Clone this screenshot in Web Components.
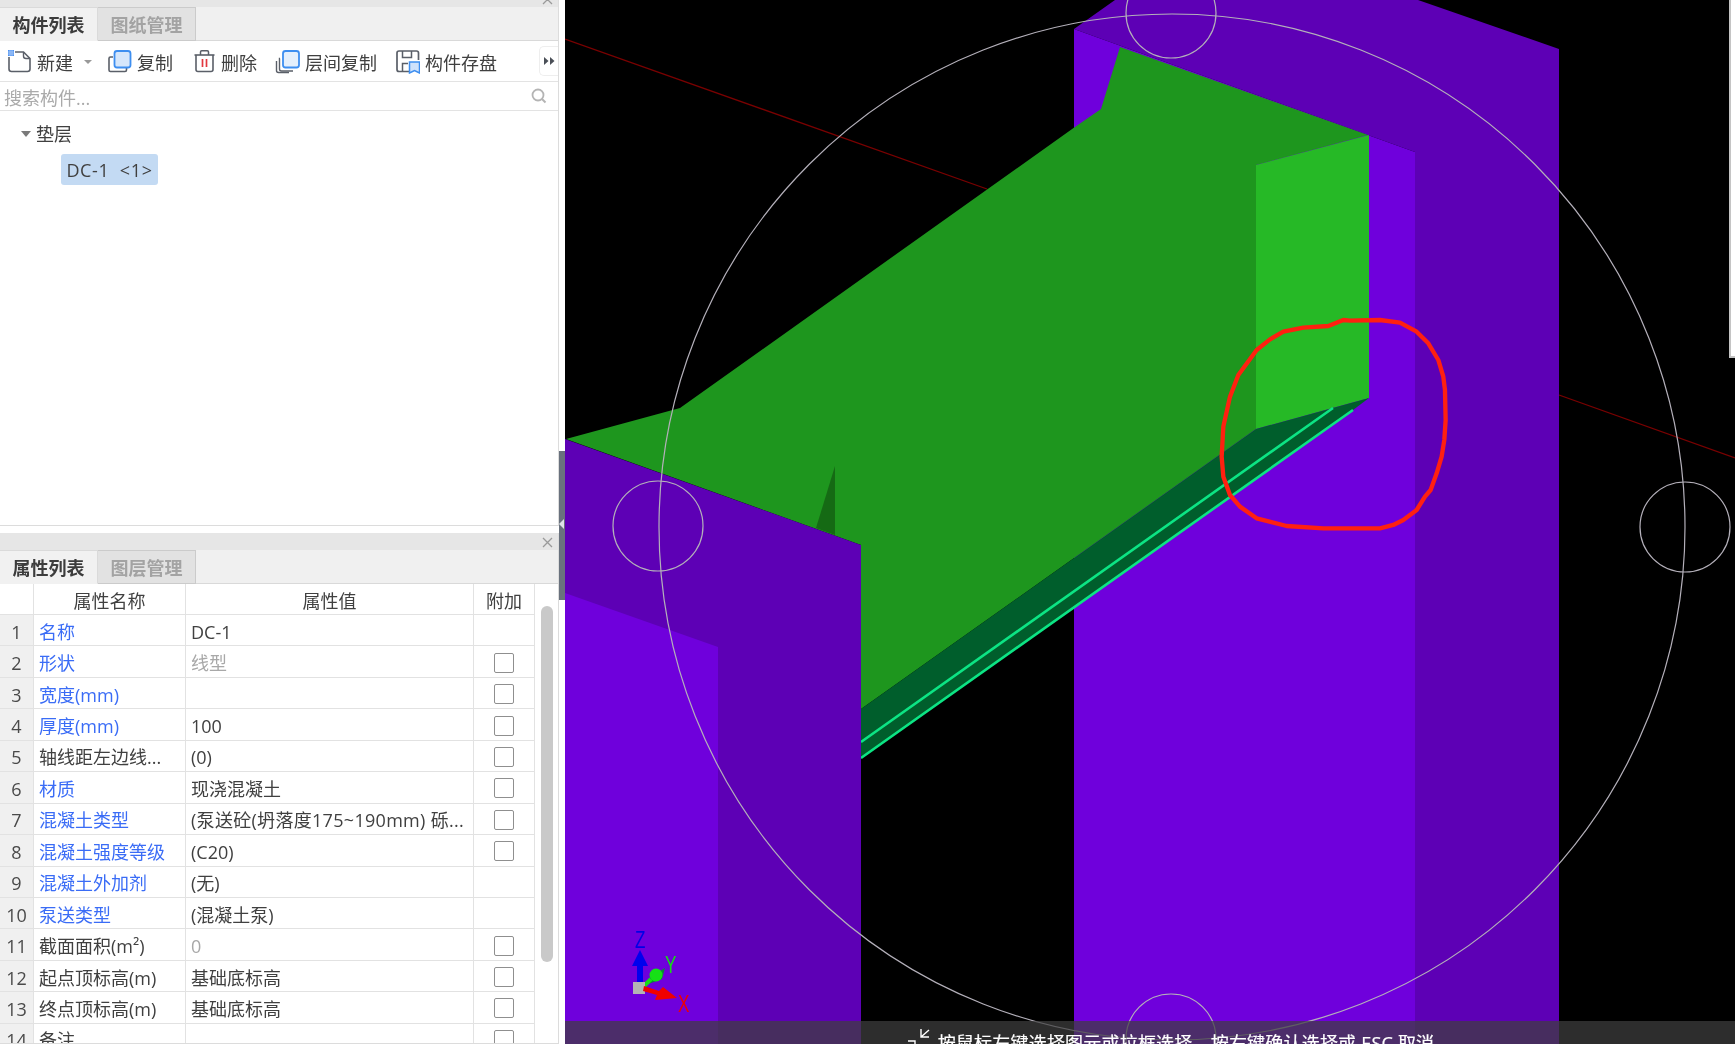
<!DOCTYPE html>
<html lang="zh">
<head>
<meta charset="utf-8">
<title>构件列表</title>
<style>
  html, body { margin: 0; padding: 0; background: #000; overflow: hidden; }
  body { font: 18px/24px "Open Sans", "Noto Sans CJK SC", sans-serif; color: #3c3c3c; }
</style>
</head>
<body>
<x-app>
  <x-sidebar slot="side">
    <x-panel style="--panel-h: 526px; --title-h: 7px;">
      <x-tab slot="tabs" active>构件列表</x-tab>
      <x-tab slot="tabs">图纸管理</x-tab>
      <x-toolbar>
        <x-tool icon="new" caret>新建</x-tool>
        <x-tool icon="copy" style="margin-left:15px">复制</x-tool>
        <x-tool icon="trash" style="margin-left:18px">删除</x-tool>
        <x-tool icon="floor" style="margin-left:18px">层间复制</x-tool>
        <x-tool icon="save" style="margin-left:18px">构件存盘</x-tool>
      </x-toolbar>
      <x-search placeholder="搜索构件..."></x-search>
      <x-tree>
        <span slot="group">垫层</span>
        <span>DC-1  &lt;1&gt;</span>
      </x-tree>
    </x-panel>
    <x-panel style="--panel-h: 511px; --title-h: 17px; margin-top: 7px;">
      <x-tab slot="tabs" active>属性列表</x-tab>
      <x-tab slot="tabs">图层管理</x-tab>
      <x-prop-table>
        <x-prop-row index="1" link><span slot="name">名称</span>DC-1</x-prop-row>
        <x-prop-row index="2" link check gray><span slot="name">形状</span>线型</x-prop-row>
        <x-prop-row index="3" link check><span slot="name">宽度(mm)</span></x-prop-row>
        <x-prop-row index="4" link check><span slot="name">厚度(mm)</span>100</x-prop-row>
        <x-prop-row index="5" check><span slot="name">轴线距左边线...</span>(0)</x-prop-row>
        <x-prop-row index="6" link check><span slot="name">材质</span>现浇混凝土</x-prop-row>
        <x-prop-row index="7" link check><span slot="name">混凝土类型</span><span style="letter-spacing:.3px">(泵送砼(坍落度175~190mm) 砾...</span></x-prop-row>
        <x-prop-row index="8" link check><span slot="name">混凝土强度等级</span>(C20)</x-prop-row>
        <x-prop-row index="9" link><span slot="name">混凝土外加剂</span>(无)</x-prop-row>
        <x-prop-row index="10" link><span slot="name">泵送类型</span>(混凝土泵)</x-prop-row>
        <x-prop-row index="11" check gray><span slot="name">截面面积(m²)</span>0</x-prop-row>
        <x-prop-row index="12" check><span slot="name">起点顶标高(m)</span>基础底标高</x-prop-row>
        <x-prop-row index="13" check><span slot="name">终点顶标高(m)</span>基础底标高</x-prop-row>
        <x-prop-row index="14" check><span slot="name">备注</span></x-prop-row>
      </x-prop-table>
    </x-panel>
  </x-sidebar>
  <x-scene slot="main">
    <x-hint>按鼠标左键选择图元或拉框选择，按右键确认选择或 ESC 取消</x-hint>
  </x-scene>
</x-app>

<script>
const icons = {
    // blue dotted corner + page with a folded corner
    new: `<path d="M8 3h8.5L23 9.5V20a2.5 2.5 0 0 1-2.5 2.5h-16A2.5 2.5 0 0 1 2 20V8" fill="#fff" stroke="#5a5f68" stroke-width="1.6"/>
          <path d="M16.5 3v4a2.5 2.5 0 0 0 2.5 2.5h4" fill="none" stroke="#5a5f68" stroke-width="1.4"/>
          <rect x="1" y="1" width="6" height="6" fill="#4a90f0"/>
          <path d="M1 3h6M1 5h6M3 1v6M5 1v6" stroke="#bcd6fa" stroke-width=".7"/>`,
    copy: `<path d="M6 8H3.500A1.500 1.500 0 0 0 2 9.500V21a1.500 1.500 0 0 0 1.500 1.500H18A1.500 1.500 0 0 0 19.500 21v-2" fill="none" stroke="#5a5f68" stroke-width="1.6"/>
           <rect x="7.500" y="2" width="16" height="16.500" rx="2.500" fill="#d5e6fb" stroke="#3d8ef0" stroke-width="1.800"/>`,
    trash: `<g transform="translate(2 0)">
            <path d="M1.500 6h20" stroke="#5a5f68" stroke-width="1.600"/>
            <path d="M7.500 6V3a1.200 1.200 0 0 1 1.200-1.200h5.600A1.200 1.200 0 0 1 15.500 3v3" fill="none" stroke="#5a5f68" stroke-width="1.500"/>
            <path d="M3 6v14.500A2 2 0 0 0 5 22.500h13a2 2 0 0 0 2-2V6" fill="none" stroke="#5a5f68" stroke-width="1.600"/>
            <path d="M9.500 10v8M13.500 10v8" stroke="#e2383f" stroke-width="1.700"/></g>`,
    floor: `<path d="M5 9.500H4.500V20a2 2 0 0 0 2 2H18" fill="none" stroke="#5a5f68" stroke-width="1.400"/>
            <path d="M1.500 12v9.500a2 2 0 0 0 2 2H14" fill="none" stroke="#5a5f68" stroke-width="1.400"/>
            <rect x="8" y="2" width="16" height="16.500" rx="2.500" fill="#e4effc" stroke="#3d8ef0" stroke-width="1.800"/>`,
    save: `<path d="M14 22.500H4A2 2 0 0 1 2 20.500V4a2 2 0 0 1 2-2h17.500a2 2 0 0 1 2 2v7" fill="none" stroke="#5a5f68" stroke-width="1.700"/>
           <path d="M7.500 2v6.500h9V2M7.500 22v-7.500H13" fill="none" stroke="#5a5f68" stroke-width="1.500"/>
           <path d="M14.500 13h10v11l-5-2.500-5 2.500z" fill="#cfe2fb" stroke="#3d8ef0" stroke-width="1.500"/>`
};

const appTemplate = document.createElement('template');
appTemplate.innerHTML = `
  <style>
    :host { display: flex; width: 1735px; height: 1044px; overflow: hidden; }
    ::slotted([slot=side]) { flex: 0 0 565px; }
    ::slotted([slot=main]) { flex: 1 1 auto; }
  </style>
  <slot name="side"></slot>
  <slot name="main"></slot>
`;

class XApp extends HTMLElement {
    constructor() {
        super();
        this.root = this.attachShadow({ mode: 'open' });
        this.root.appendChild(appTemplate.content.cloneNode(true));
    }
}

const sidebarTemplate = document.createElement('template');
sidebarTemplate.innerHTML = `
  <style>
    :host { display: flex; height: 1044px; background: #fff; overflow: hidden; filter: blur(.3px); }
    .panels { flex: 0 0 559px; display: flex; flex-direction: column; }
    .splitter { flex: 0 0 6px; padding-top: 451px; }
    .grip { position: relative; height: 149px; background: #69717d; }
    /* little arrow lying on the grip */
    .grip::after {
      content: ""; position: absolute; left: 0; top: 68px;
      border: 5px solid transparent; border-left-width: 0; border-right: 5px solid #dfe3e7;
    }
  </style>
  <div class="panels"><slot></slot></div>
  <div class="splitter"><div class="grip"></div></div>
`;

class XSidebar extends HTMLElement {
    constructor() {
        super();
        this.root = this.attachShadow({ mode: 'open' });
        this.root.appendChild(sidebarTemplate.content.cloneNode(true));
    }
}

const panelTemplate = document.createElement('template');
panelTemplate.innerHTML = `
  <style>
    :host {
      display: flex; flex-direction: column; flex: none;
      height: var(--panel-h); box-sizing: border-box;
      border-right: 1px solid #dcdcdc; border-bottom: 1px solid #dcdcdc;
      background: #fff; overflow: hidden;
    }
    .title {
      flex: none; height: var(--title-h); background: #e6e6e6;
      display: flex; justify-content: flex-end; align-items: flex-end; padding-right: 5px;
    }
    .title svg { display: block; flex: none; margin-bottom: 2px; }
    .tabs {
      flex: none; height: 34px; box-sizing: border-box; display: flex;
      background: #f0f0f0; border-bottom: 1px solid #d9d9d9;
    }
  </style>
  <div class="title">
    <svg width="11" height="11" viewBox="0 0 11 11"><path d="M1 1l9 9M10 1l-9 9" stroke="#9a9a9a" stroke-width="1.300"/></svg>
  </div>
  <div class="tabs"><slot name="tabs"></slot></div>
  <slot></slot>
`;

class XPanel extends HTMLElement {
    constructor() {
        super();
        this.root = this.attachShadow({ mode: 'open' });
        this.root.appendChild(panelTemplate.content.cloneNode(true));
    }
}

const tabTemplate = document.createElement('template');
tabTemplate.innerHTML = `
  <style>
    :host {
      display: flex; align-items: center; justify-content: center;
      width: 98px; box-sizing: border-box; height: 34px; padding-top: 2px;
      font-size: 18px; font-weight: 700; color: #a3a3a3;
      background: #e2e2e2; border: 1px solid #cbcbcb; border-left: 0;
    }
    :host([active]) { color: #3c3c3c; background: #f1f1f1; border-color: #dadada; border-bottom-color: #f1f1f1; }
  </style>
  <slot></slot>
`;

class XTab extends HTMLElement {
    constructor() {
        super();
        this.root = this.attachShadow({ mode: 'open' });
        this.root.appendChild(tabTemplate.content.cloneNode(true));
    }
}

const toolbarTemplate = document.createElement('template');
toolbarTemplate.innerHTML = `
  <style>
    :host {
      display: flex; align-items: center; flex: none; position: relative;
      height: 41px; box-sizing: border-box; padding: 1px 0 0 7px;
      border-bottom: 1px solid #e3e3e3;
    }
    .more {
      position: absolute; right: 0; top: 5px; width: 19px; height: 30px; box-sizing: border-box;
      border: 1px solid #eeeeee; border-right: 0; border-radius: 5px 0 0 5px;
      display: flex; align-items: center; justify-content: center;
    }
  </style>
  <slot></slot>
  <div class="more"><svg width="11" height="8" viewBox="0 0 11 8"><path d="M0 0l4.500 4L0 8zM6 0l4.500 4L6 8z" fill="#4a4f57"/></svg></div>
`;

class XToolbar extends HTMLElement {
    constructor() {
        super();
        this.root = this.attachShadow({ mode: 'open' });
        this.root.appendChild(toolbarTemplate.content.cloneNode(true));
    }
}

const toolTemplate = document.createElement('template');
toolTemplate.innerHTML = `
  <style>
    :host { display: flex; align-items: center; flex: none; white-space: nowrap; color: #404040; }
    svg { display: block; flex: none; margin-right: 5px; }
    .label { padding-top: 3px; }
    .caret { width: 0; height: 0; margin-left: 11px; border: 4px solid transparent; border-top-color: #999; border-bottom-width: 0; }
  </style>
  <svg width="25" height="25" viewBox="0 0 25 25"></svg>
  <span class="label"><slot></slot></span>
`;

class XTool extends HTMLElement {
    constructor() {
        super();
        this.root = this.attachShadow({ mode: 'open' });
        this.root.appendChild(toolTemplate.content.cloneNode(true));
    }

    connectedCallback() {
        this.root.querySelector('svg').innerHTML = icons[this.getAttribute('icon')];
        if (this.hasAttribute('caret')) {
            var caret = document.createElement('div');
            caret.setAttribute('class', 'caret');
            this.root.appendChild(caret);
        }
    }
}

const searchTemplate = document.createElement('template');
searchTemplate.innerHTML = `
  <style>
    :host {
      display: flex; align-items: center; justify-content: space-between; flex: none;
      height: 29px; box-sizing: border-box; padding: 0 11px 0 4px;
      border-bottom: 1px solid #e3e3e3; color: #aaa;
    }
    #text { padding-top: 4px; }
    svg { display: block; }
  </style>
  <span id="text"></span>
  <svg width="16" height="16" viewBox="0 0 16 16">
    <circle cx="7" cy="7" r="5.500" fill="none" stroke="#b4b4b4" stroke-width="1.800"/>
    <path d="M11 11l3.500 3.500" stroke="#b4b4b4" stroke-width="2"/>
  </svg>
`;

class XSearch extends HTMLElement {
    constructor() {
        super();
        this.root = this.attachShadow({ mode: 'open' });
        this.root.appendChild(searchTemplate.content.cloneNode(true));
    }

    connectedCallback() {
        this.root.querySelector('#text').textContent = this.getAttribute('placeholder');
    }
}

const treeTemplate = document.createElement('template');
treeTemplate.innerHTML = `
  <style>
    :host { display: block; flex: 1 1 auto; padding: 11px 0 0 21px; color: #404040; }
    .group { display: flex; align-items: center; height: 24px; }
    .arrow { width: 0; height: 0; margin-right: 5px; border: 5px solid transparent; border-top: 6px solid #7a7a7a; border-bottom-width: 0; }
    .leaf {
      display: flex; align-items: center; justify-content: center;
      width: 97px; height: 31px; box-sizing: border-box; margin: 8px 0 0 40px;
      background: #c3daf3; border-radius: 3px; white-space: pre; letter-spacing: .6px;
    }
  </style>
  <div class="group"><div class="arrow"></div><slot name="group"></slot></div>
  <div class="leaf"><slot></slot></div>
`;

class XTree extends HTMLElement {
    constructor() {
        super();
        this.root = this.attachShadow({ mode: 'open' });
        this.root.appendChild(treeTemplate.content.cloneNode(true));
    }
}

const propTableTemplate = document.createElement('template');
propTableTemplate.innerHTML = `
  <style>
    :host { display: flex; flex: none; height: 470px; overflow: hidden; }
    .rows { flex: 0 0 535px; }
    .head {
      display: grid; grid-template-columns: 34px 152px 288px 61px; height: 31px;
      color: #404040;
    }
    .head div {
      display: flex; align-items: center; justify-content: center; box-sizing: border-box; padding-top: 3px;
      border-right: 1.500px solid #e2e2e2; border-bottom: 1.500px solid #e2e2e2;
    }
    .track { flex: 1 1 auto; padding: 22px 0 0 6px; }
    .thumb { width: 12px; height: 356px; background: #c9c9c9; border-radius: 6px; }
  </style>
  <div class="rows">
    <div class="head"><div></div><div>属性名称</div><div>属性值</div><div>附加</div></div>
    <slot></slot>
  </div>
  <div class="track"><div class="thumb"></div></div>
`;

class XPropTable extends HTMLElement {
    constructor() {
        super();
        this.root = this.attachShadow({ mode: 'open' });
        this.root.appendChild(propTableTemplate.content.cloneNode(true));
    }
}

const propRowTemplate = document.createElement('template');
propRowTemplate.innerHTML = `
  <style>
    :host {
      display: grid; grid-template-columns: 34px 152px 288px 61px; height: 31.440px;
      white-space: nowrap; color: #404040;
    }
    .cell {
      display: flex; align-items: center; box-sizing: border-box; overflow: hidden; padding-top: 3px;
      border-right: 1.500px solid #e2e2e2; border-bottom: 1.500px solid #e2e2e2;
    }
    .index { justify-content: center; background: #f0f0f0; color: #4a4a4a; }
    .name { padding-left: 5px; }
    .value { padding-left: 5px; }
    :host([link]) .name { color: #3a6cf6; }
    :host([gray]) .value { color: #a8a8a8; }
    .extra { justify-content: center; padding: 2px 1px 0 0; }
    .box { display: none; width: 20px; height: 20px; box-sizing: border-box; border: 1.500px solid #8f8f8f; border-radius: 2px; background: #fff; }
    :host([check]) .box { display: block; }
  </style>
  <div class="cell index"></div>
  <div class="cell name"><slot name="name"></slot></div>
  <div class="cell value"><slot></slot></div>
  <div class="cell extra"><div class="box"></div></div>
`;

class XPropRow extends HTMLElement {
    constructor() {
        super();
        this.root = this.attachShadow({ mode: 'open' });
        this.root.appendChild(propRowTemplate.content.cloneNode(true));
    }

    connectedCallback() {
        this.root.querySelector('.index').textContent = this.getAttribute('index');
    }
}

const sceneTemplate = document.createElement('template');
sceneTemplate.innerHTML = `
  <style>
    :host { display: block; position: relative; height: 1044px; background: #000; overflow: hidden; }
    svg { display: block; }
    text { font-family: "Liberation Sans", sans-serif; }
    .gizmo { filter: blur(.6px); }
    /* edge of another window, it hangs over the viewport */
    .edge {
      position: absolute; right: 0; top: 0; width: 6px; height: 358px; box-sizing: border-box;
      background: #fff; border-left: 2px solid #c4c4c4; border-bottom: 2px solid #c4c4c4;
    }
  </style>
  <svg width="1170" height="1044" viewBox="565 0 1170 1044">
    <path d="M565 39L987 189M1559 395L1735 458" stroke="#7a0000" stroke-width="1.300" fill="none"/>

    <!-- right column -->
    <path d="M1115 0H1418L1559 49V1044H1415V152L1074 29Z" fill="#5d00b5"/>
    <path d="M1074 29L1415 152V1044H1074Z" fill="#6f00dc"/>

    <!-- wall and strip -->
    <path d="M566 439L680 408L1073.500 128L1101 109L1120 47L1368 135L1256 165V429L861 709V545Z" fill="#1e961e"/>
    <path d="M835 466L816 528L835 535Z" fill="#156a14"/>
    <path d="M1256 165L1369 135V398L1256 429Z" fill="#26b926"/>
    <path d="M861 709L1256 429L1369 398L1353 410L861 758Z" fill="#005e2c"/>
    <path d="M861 742L1333 408M861 758L1353 410" stroke="#0ce484" stroke-width="2.600" fill="none"/>

    <!-- left column -->
    <path d="M565 439L861 545V1044H565Z" fill="#5d00b5"/>
    <path d="M565 593L718 647V1044H565Z" fill="#6f00dc"/>

    <!-- circles -->
    <g fill="none" stroke="#b4b0ba" stroke-width="1.200">
      <circle cx="1172" cy="527" r="513"/>
      <circle cx="658" cy="526" r="45"/>
      <circle cx="1685" cy="527" r="45"/>
      <circle cx="1171" cy="13" r="45"/>
      <circle cx="1171" cy="1039" r="45"/>
    </g>

    <!-- hand drawn ring -->
    <path transform="translate(1180 280) scale(.3333)" fill="none" stroke="#ff2010" stroke-width="13" stroke-linejoin="round"
      d="M510 122L600 120L660 128L710 155L745 190L775 240L790 290L795 330L797 420L793 480L785 530L770 580L752 630L735 650L710 690L670 720L640 735L600 745L430 745L320 738L230 715L180 680L150 645L130 590L125 530L130 440L150 350L175 285L230 210L270 178L310 155L370 143L445 138L490 120Z"/>

    <!-- axis gizmo -->
    <g class="gizmo">
      <rect x="637" y="964" width="6" height="20" fill="#0000ee"/>
      <path d="M640 950L648 966H632Z" fill="#0000ee"/>
      <path d="M643 986L652 976L660 971L665 968L662 979Z" fill="#0a8a3a"/>
      <path d="M643 987L651 979" stroke="#16e016" stroke-width="4"/>
      <circle cx="656" cy="975" r="6.500" fill="#16e016"/>
      <rect x="633" y="982" width="12" height="12" fill="#b4b4b4"/>
      <path d="M644 986L659 991L663 987L677 998L655 1000L657 995L643 991Z" fill="#f00000"/>
      <text transform="translate(635 948) scale(.9 1.300)" font-size="19" fill="#0000e6">Z</text>
      <text transform="translate(665 973) scale(.9 1.300)" font-size="19" fill="#18d818">Y</text>
      <text transform="translate(678 1012) scale(.9 1.300)" font-size="19" fill="#ee0000">X</text>
    </g>
  </svg>
  <div class="edge"></div>
  <slot></slot>
`;

class XScene extends HTMLElement {
    constructor() {
        super();
        this.root = this.attachShadow({ mode: 'open' });
        this.root.appendChild(sceneTemplate.content.cloneNode(true));
    }
}

const hintTemplate = document.createElement('template');
hintTemplate.innerHTML = `
  <style>
    :host {
      position: absolute; left: 0; right: 0; bottom: 0; height: 23px; overflow: hidden;
      display: flex; justify-content: center; padding: 8px 0 0 42px; box-sizing: border-box;
      background: rgba(62, 62, 62, .72); color: #fff; font-size: 18px; line-height: 24px;
      white-space: nowrap; filter: blur(.3px); letter-spacing: .2px; -webkit-text-stroke: .2px #fff;
    }
    svg { display: block; flex: none; margin: 0 6px 0 0; }
    span { padding-top: 2px; }
  </style>
  <svg width="24" height="15" viewBox="0 0 24 15">
    <path d="M13 0V8H21M13 8L21 1" fill="none" stroke="#fff" stroke-width="1.400"/>
    <path d="M0 12H7V15" fill="none" stroke="#fff" stroke-width="1.400"/>
  </svg>
  <span><slot></slot></span>
`;

class XHint extends HTMLElement {
    constructor() {
        super();
        this.root = this.attachShadow({ mode: 'open' });
        this.root.appendChild(hintTemplate.content.cloneNode(true));
    }
}

customElements.define('x-app', XApp);
customElements.define('x-sidebar', XSidebar);
customElements.define('x-panel', XPanel);
customElements.define('x-tab', XTab);
customElements.define('x-toolbar', XToolbar);
customElements.define('x-tool', XTool);
customElements.define('x-search', XSearch);
customElements.define('x-tree', XTree);
customElements.define('x-prop-table', XPropTable);
customElements.define('x-prop-row', XPropRow);
customElements.define('x-scene', XScene);
customElements.define('x-hint', XHint);
</script>
</body>
</html>
